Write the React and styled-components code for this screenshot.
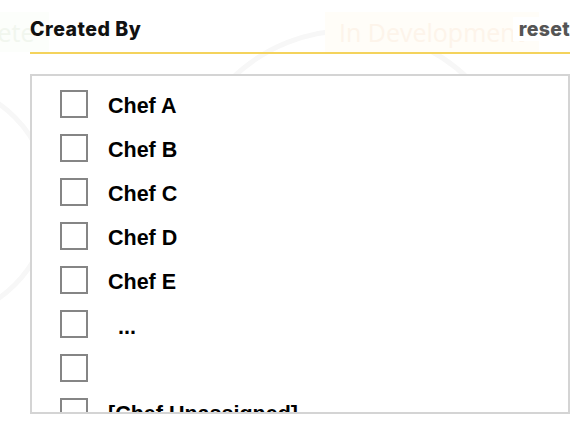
import styled, { createGlobalStyle } from "styled-components"

const GlobalStyle = createGlobalStyle`
    html, body {
        margin: 0;
        padding: 0;
        background: #ffffff;
    }
    body {
        width: 586px;
        height: 442px;
        overflow: hidden;
    }
`

const chefs = ['Chef A', 'Chef B', 'Chef C', 'Chef D', 'Chef E', '...', '', '[Chef Unassigned]']

// faint page that sits behind the filter sheet
const Backdrop = styled.div`
    position: absolute;
    inset: 0;
    overflow: hidden;
    pointer-events: none;
`

const Ring = styled.div`
    position: absolute;
    left: ${({x}) => x}px;
    top: ${({y}) => y}px;
    width: ${({size}) => size}px;
    height: ${({size}) => size}px;
    border: 5px solid #f7f7f7;
    border-radius: 50%;
`

const Tag = styled.div`
    position: absolute;
    left: ${({x}) => x}px;
    top: 12px;
    height: 40px;
    padding: 0 14px;
    display: flex;
    align-items: center;
    background: ${({bg}) => bg};
    color: ${({color}) => color};
    font-family: "Open Sans", sans-serif;
    font-size: 25px;
`

const Container = styled.div`
    position: relative;
    width: 586px;
    height: 442px;
    padding: 0 16px 0 30px;
    box-sizing: border-box;
`

const Header = styled.div`
    display: flex;
    justify-content: space-between;
    align-items: center;
    height: 54px;
    padding-top: 5px;
    box-sizing: border-box;
    border-bottom: 2px solid #f4d35c;
`

const Title = styled.h2`
    margin: 0;
    font-family: Inter, sans-serif;
    font-size: 19.5px;
    font-weight: 800;
    color: #111;
    letter-spacing: 0.5px;
`

const Reset = styled.button`
    border: none;
    background: #fff;
    padding: 0 0 0 6px;
    font-family: Inter, sans-serif;
    font-size: 19.5px;
    font-weight: 800;
    color: #555;
    letter-spacing: 0.3px;
    cursor: pointer;
`

const ListBox = styled.div`
    margin-top: 20px;
    height: 340px;
    border: 2px solid #d4d4d4;
    box-sizing: border-box;
    background: rgba(255, 255, 255, 0.95);
    overflow: hidden;
    padding: 14px 0 0 28px;
    display: flex;
    flex-direction: column;
    gap: 16px;
`

const Row = styled.label`
    display: flex;
    align-items: center;
    height: 28px;
    flex-shrink: 0;
    cursor: pointer;
`

const Box = styled.span`
    width: 28px;
    height: 28px;
    box-sizing: border-box;
    border: 2px solid #858585;
    background: #fff;
    flex-shrink: 0;
`

const Name = styled.span`
    margin-left: ${({dots}) => dots ? '30px' : '20px'};
    padding-top: ${({dots}) => dots ? '6px' : '4px'};
    font-family: "Liberation Sans", Arial, sans-serif;
    font-size: 21.5px;
    font-weight: 700;
    color: #000;
    white-space: nowrap;
`

const App = () => {
    return (
        <>
            <GlobalStyle/>
            <Backdrop>
                <Ring x={178} y={28} size={334}/>
                <Ring x={-190} y={80} size={232}/>
                <Tag x={-92} bg='#fcfefb' color='#f1f6ee'>Complete</Tag>
                <Tag x={325} bg='#fffdf8' color='#fdf4ea'>In Development</Tag>
            </Backdrop>
            <Container>
                <Header>
                    <Title>Created By</Title>
                    <Reset>reset</Reset>
                </Header>
                <ListBox>
                    {chefs.map((chef, i) => (
                        <Row key={i}>
                            <Box/>
                            <Name dots={chef === '...'}>{chef}</Name>
                        </Row>
                    ))}
                </ListBox>
            </Container>
        </>
    )
}

export default App
